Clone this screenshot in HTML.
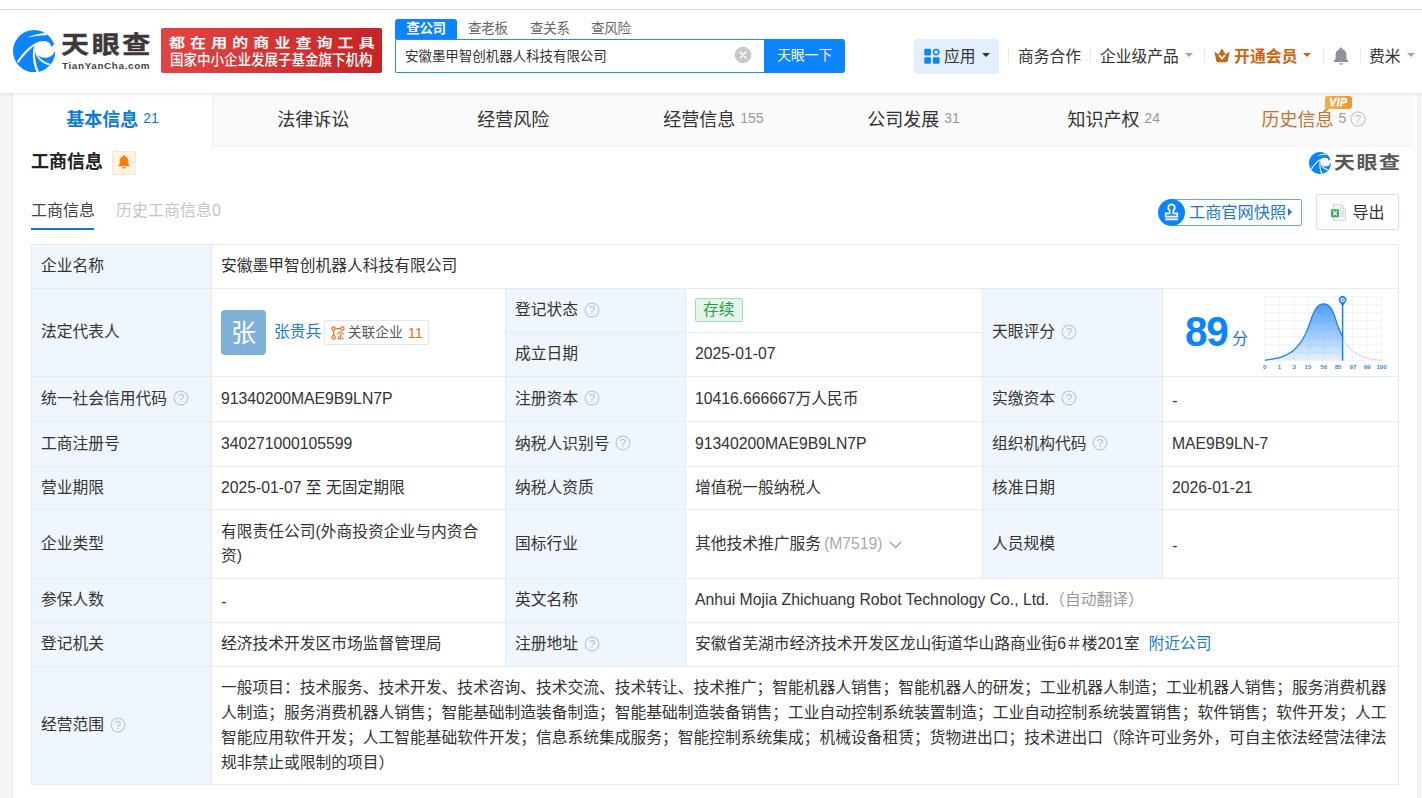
<!DOCTYPE html>
<html lang="zh-CN">
<head>
<meta charset="utf-8">
<title>天眼查 - 安徽墨甲智创机器人科技有限公司</title>
<style>
*{box-sizing:border-box;margin:0;padding:0}
html,body{width:1422px;height:798px;overflow:hidden;background:#f5f5f5}
body{font-family:"Liberation Sans","Noto Sans CJK SC",sans-serif;color:#333;font-size:16px;position:relative}
.abs{position:absolute}
#topstrip{left:0;top:0;width:1422px;height:9px;background:#fff}
#topline{left:0;top:9px;width:1422px;height:1px;background:#e4e4e4}
#header{left:0;top:10px;width:1422px;height:83px;background:#fff;box-shadow:0 1px 4px rgba(0,0,0,.10);z-index:5}
#content{left:13px;top:93px;width:1404px;height:705px;background:#fff;box-shadow:-1px 0 0 #ededed,1px 0 0 #efefef}
#nav{left:0;top:0;width:1401px;height:54px;background:#fafafa;border-bottom:2px solid #f6f6f6}
.tab{position:absolute;top:0;height:53px;width:200.14px;text-align:center;line-height:55px;font-size:18px;color:#333;white-space:nowrap}
.tab .n{font-size:14px;color:#999;margin-left:5px;position:relative;top:-2.8px}
.tab.on{background:#fff;color:#0a7be0;font-weight:bold;border-right:1px solid #eee;height:54px}
.tab.on .n{color:#0a7be0;font-weight:normal}
.nowrap{white-space:nowrap}

.stab{top:9px;font-size:13.5px;line-height:19px;color:#666;letter-spacing:-0.3px}
.htxt{top:34.6px;font-size:15.75px;line-height:24px;color:#333}
.sep{top:38px;width:1px;height:15px;background:#e8e8e8}
.caret{top:43.2px;width:0;height:0;border-left:4px solid transparent;border-right:4px solid transparent;border-top:4.5px solid #a0a0a0}

.c{position:absolute;border:1px solid #e6ebf2;background:#fff;display:flex;align-items:center;padding:0.6px 9px 0 8.9px;font-size:15.75px;line-height:24.75px;white-space:nowrap;color:#333}
.c.l{background:#eff6fd}
.q{margin-left:6px;flex:none;margin-top:-2px}
.lnk{color:#1b78d8}
.ava{display:inline-block;width:45px;height:45px;border-radius:4px;background:#7eb0d8;color:#fff;font-size:25px;line-height:46px;text-align:center;flex:none}
.rel{display:inline-flex;align-items:center;height:25px;border:1px solid #e6e6e6;border-radius:2px;padding:0 5px 0 5.5px;margin-left:3px;font-size:13.5px;line-height:22px;background:#fff}
.st{display:inline-block;height:24px;line-height:22px;padding:0 7.1px;margin-top:-2.2px;border:1px solid #a6dcb4;background:#e4f6e9;color:#2b9a4c;border-radius:2px;font-size:15.75px}

.vip{position:absolute;left:111px;top:3px;width:27px;height:13px;background:linear-gradient(90deg,#f0b04e,#e8973a);color:#fff;font-size:10.5px;line-height:13.5px;font-weight:bold;font-style:italic;border-radius:3px 3px 3px 0;text-align:center;letter-spacing:0.4px;-webkit-text-stroke:0.3px #fff}
.vip:after{content:"";position:absolute;left:0;top:13px;border-top:4px solid #e49a3c;border-right:4px solid transparent}
</style>
</head>
<body>
<div id="topstrip" class="abs"></div>
<div id="topline" class="abs"></div>
<div id="header" class="abs">
<!--HS-->
<svg class="abs" style="left:12.7px;top:19.7px" width="42.3" height="42.3" viewBox="70 85 625 625">
<circle cx="382.5" cy="397.5" r="312.5" fill="#0a84ff"/>
<path fill="#fff" d="M400,283 C455,245 560,235 605,275 C630,300 637,328 625,347 L662,305 L710,290 L710,380 L692,380 C680,450 610,500 525,495 C460,490 415,455 398,415 C390,370 392,320 400,283 Z"/>
<path fill="#fff" d="M280,200 C360,158 460,134 552,130 L572,162 C470,158 370,178 280,200 Z"/>
<path fill="#fff" d="M405,276 C295,335 195,445 128,552 L150,574 C218,470 312,368 405,302 Z"/>
<path fill="#fff" d="M398,283 C345,400 352,560 418,708 L452,702 C390,560 380,420 404,300 Z"/>
<path fill="#fff" d="M396,410 C415,505 498,578 603,606 L618,584 C522,556 450,498 420,436 Z"/>
</svg>
<div class="abs nowrap" id="logotxt" style="left:60.5px;top:16.5px;font-size:24px;line-height:36px;font-weight:700;color:#3d3837;transform-origin:0 0;transform:scaleX(1.17);letter-spacing:2.2px;-webkit-text-stroke:0.45px #3d3837">天眼查</div>
<div class="abs nowrap" id="logosub" style="left:62px;top:50px;font-size:8.4px;line-height:12px;font-weight:bold;color:#444;transform-origin:0 0;transform:scaleX(1.18);letter-spacing:0.53px">TianYanCha.com</div>
<div class="abs" id="banner" style="left:161px;top:18px;width:221px;height:44.6px;border-radius:2px;background:linear-gradient(90deg,#e24444 0%,#d63434 50%,#c62424 100%);color:#fff">
<div class="abs nowrap" id="bn1" style="left:8px;top:4.5px;font-weight:500;-webkit-text-stroke:0.25px #fff;font-size:12.8px;line-height:20px;letter-spacing:4.2px;transform-origin:0 0;transform:scaleX(1.24)">都在用的商业查询工具</div>
<div class="abs nowrap" id="bn2" style="left:8.8px;top:21.9px;font-size:14.8px;line-height:20px;font-weight:500;transform-origin:0 0;transform:scaleX(0.912)">国家中小企业发展子基金旗下机构</div>
</div>
<div class="abs nowrap" style="left:395px;top:9px;width:62px;height:20px;background:#0a84ff;border-radius:3px 3px 0 0;color:#fff;font-size:13.5px;line-height:19px;text-align:center;font-weight:bold;letter-spacing:-0.3px">查公司</div>
<div class="abs nowrap stab" style="left:468px">查老板</div>
<div class="abs nowrap stab" style="left:530px">查关系</div>
<div class="abs nowrap stab" style="left:591px">查风险</div>
<div class="abs" style="left:395px;top:28.5px;width:370px;height:34.5px;border:1.5px solid #2a8bea;border-right:0;border-radius:2px 0 0 2px;background:#fff"></div>
<div class="abs nowrap" style="left:405px;top:30px;font-size:13.5px;line-height:34px;color:#333;letter-spacing:-0.05px">安徽墨甲智创机器人科技有限公司</div>
<svg class="abs" style="left:734px;top:36px" width="18" height="18" viewBox="0 0 18 18"><circle cx="9" cy="9" r="8.3" fill="#c8c8cc"/><path d="M6,6 L12,12 M12,6 L6,12" stroke="#fff" stroke-width="1.4" stroke-linecap="round"/></svg>
<div class="abs nowrap" style="left:764px;top:29px;width:81px;height:34px;background:#0a84ff;border-radius:0 3px 3px 0;color:#fff;font-size:14px;line-height:33px;text-align:center;letter-spacing:-0.3px">天眼一下</div>
<div class="abs" style="left:914px;top:28.5px;width:85px;height:35.5px;background:#e3effc;border-radius:3px"></div>
<svg class="abs" style="left:924px;top:38px" width="17" height="17" viewBox="0 0 17 17"><rect x="0.3" y="0.8" width="6.6" height="6.6" rx="1.2" fill="#0a84ff"/><rect x="0.3" y="9.2" width="6.6" height="6.6" rx="1.2" fill="#0a84ff"/><rect x="8.9" y="9.2" width="6.6" height="6.6" rx="1.2" fill="#0a84ff"/><circle cx="12.2" cy="4.1" r="2.6" fill="none" stroke="#0a84ff" stroke-width="1.5"/></svg>
<div class="abs nowrap htxt" style="left:944px">应用</div>
<div class="abs caret" style="left:982px;border-top-color:#333"></div>
<div class="abs sep" style="left:1008px"></div>
<div class="abs nowrap htxt" style="left:1018px">商务合作</div>
<div class="abs sep" style="left:1090px"></div>
<div class="abs nowrap htxt" style="left:1100px">企业级产品</div>
<div class="abs caret" style="left:1185px"></div>
<div class="abs sep" style="left:1204px"></div>
<svg class="abs" style="left:1213.5px;top:38px" width="16" height="15" viewBox="0 0 16 15"><path fill="#d2620c" d="M0.3,3.6 L4.3,6.6 L8,0.6 L11.7,6.6 L15.7,3.6 L13.6,13.2 Q13.4,14.2 12.4,14.2 L3.6,14.2 Q2.6,14.2 2.4,13.2 Z"/><path d="M5.4,7.6 L8,10.6 L10.6,7.6" fill="none" stroke="#fff" stroke-width="1.7" stroke-linecap="round" stroke-linejoin="round"/></svg>
<div class="abs nowrap htxt" style="left:1234px;color:#d2620c;font-weight:bold;letter-spacing:0.15px">开通会员</div>
<div class="abs caret" style="left:1303px;border-top-color:#d2620c"></div>
<div class="abs sep" style="left:1323px"></div>
<svg class="abs" style="left:1333px;top:37px" width="16" height="18.4" viewBox="0 0 16 19"><path fill="#8e9198" d="M8,0.6 C8.8,0.6 9.4,1.2 9.4,2 L9.4,2.4 C12,3 13.6,5.2 13.6,8 L13.6,12.2 L15.4,14.4 L15.4,15.4 L0.6,15.4 L0.6,14.4 L2.4,12.2 L2.4,8 C2.4,5.2 4,3 6.6,2.4 L6.6,2 C6.6,1.2 7.2,0.6 8,0.6 Z"/><rect x="6" y="16.8" width="4" height="1.4" rx="0.7" fill="#8e9198"/></svg>
<div class="abs sep" style="left:1359.5px"></div>
<div class="abs nowrap htxt" style="left:1369px">费米</div>
<div class="abs caret" style="left:1407px"></div>
<!--HE-->
</div>
<div id="content" class="abs">
<div id="nav" class="abs">
<div class="tab on" style="left:0">基本信息<span class="n">21</span></div>
<div class="tab" style="left:200.14px">法律诉讼</div>
<div class="tab" style="left:400.28px">经营风险</div>
<div class="tab" style="left:600.42px">经营信息<span class="n">155</span></div>
<div class="tab" style="left:800.56px">公司发展<span class="n">31</span></div>
<div class="tab" style="left:1000.70px">知识产权<span class="n">24</span></div>
<div class="tab" style="left:1200.84px;color:#c8702a">历史信息<span class="n">5</span><svg style="display:inline-block;vertical-align:-1px;margin-left:4px;position:relative;top:0.4px" width="16" height="16" viewBox="0 0 16 16"><circle cx="8" cy="8" r="7.1" fill="none" stroke="#c3ccd8" stroke-width="1.2"/><text x="8" y="12.1" text-anchor="middle" font-family="Liberation Sans,sans-serif" font-size="11.6" fill="#b3becc">?</text></svg><span class="vip">VIP</span></div>
</div>
<!--SS-->
<div class="abs nowrap" style="left:18px;top:56px;font-size:18px;line-height:26px;font-weight:bold;color:#222">工商信息</div>
<div class="abs" style="left:99px;top:57.5px;width:24px;height:24px;background:#fff3e6;border:1px solid #fde3c8;border-radius:2px"></div>
<svg class="abs" style="left:105px;top:61.8px" width="12" height="14" viewBox="0 0 12 14"><path fill="#ff7d00" d="M6,0.3 C6.7,0.3 7.1,0.8 7.1,1.4 C9.2,1.9 10.3,3.6 10.3,5.8 L10.3,8.8 L11.6,10.4 L11.6,11.2 L0.4,11.2 L0.4,10.4 L1.7,8.8 L1.7,5.8 C1.7,3.6 2.8,1.9 4.9,1.4 C4.9,0.8 5.3,0.3 6,0.3 Z"/><path fill="#ff7d00" d="M4.3,12 L7.7,12 C7.5,13 6.9,13.6 6,13.6 C5.1,13.6 4.5,13 4.3,12 Z"/></svg>
<svg class="abs" style="left:1296px;top:58.5px" width="22" height="22" viewBox="70 85 625 625">
<circle cx="382.5" cy="397.5" r="312.5" fill="#0a84ff"/>
<path fill="#fff" d="M400,283 C455,245 560,235 605,275 C630,300 637,328 625,347 L662,305 L710,290 L710,380 L692,380 C680,450 610,500 525,495 C460,490 415,455 398,415 C390,370 392,320 400,283 Z"/>
<path fill="#fff" d="M280,200 C360,158 460,134 552,130 L572,162 C470,158 370,178 280,200 Z"/>
<path fill="#fff" d="M405,276 C295,335 195,445 128,552 L150,574 C218,470 312,368 405,302 Z"/>
<path fill="#fff" d="M398,283 C345,400 352,560 418,708 L452,702 C390,560 380,420 404,300 Z"/>
<path fill="#fff" d="M396,410 C415,505 498,578 603,606 L618,584 C522,556 450,498 420,436 Z"/>
</svg>
<div class="abs nowrap" id="wm" style="left:1320.5px;top:56.5px;font-size:18px;line-height:26px;font-weight:700;color:#585858;transform-origin:0 0;transform:scaleX(1.16);letter-spacing:1.4px">天眼查</div>

<div class="abs nowrap" style="left:18px;top:106px;font-size:16px;line-height:24px;color:#444">工商信息</div>
<div class="abs" style="left:18px;top:134.8px;width:63px;height:2.2px;background:#0a7be0"></div>
<div class="abs nowrap" style="left:103px;top:106px;font-size:16px;line-height:24px;color:#c3c6cc">历史工商信息0</div>

<div class="abs" style="left:1158px;top:106px;width:131px;height:26.5px;border:1px solid #6aa9ea;border-radius:2px;background:#fff"></div>
<div class="abs" style="left:1145px;top:105.5px;width:27px;height:27px;border-radius:50%;background:#0a84ff"></div>
<svg class="abs" style="left:1150px;top:109.5px" width="17" height="18.2" viewBox="0 0 15 16"><path fill="none" stroke="#fff" stroke-width="1.5" d="M7.5,1.2 a2.9,2.9 0 0 1 1.6,5.3 L9.1,9.2 L12.6,9.2 L12.6,12 L2.4,12 L2.4,9.2 L5.9,9.2 L5.9,6.5 A2.9,2.9 0 0 1 7.5,1.2 Z"/><rect x="2" y="13.6" width="11" height="1.6" fill="#fff"/></svg>
<div class="abs nowrap" style="left:1176px;top:107.4px;font-size:16.2px;line-height:24px;color:#1b78d8">工商官网快照</div>
<div class="abs" style="left:1275px;top:115px;width:0;height:0;border-top:4px solid transparent;border-bottom:4px solid transparent;border-left:4.5px solid #1b78d8"></div>

<div class="abs" style="left:1303px;top:101px;width:83px;height:35.5px;border:1px solid #dde0e8;border-radius:2px;background:#fff"></div>
<svg class="abs" style="left:1317px;top:110.5px" width="16" height="17" viewBox="0 0 16 17"><path d="M3.5,0.5 L11.5,0.5 L15.5,4.5 L15.5,16.5 L3.5,16.5 Z" fill="#f3f4f6" stroke="#d5d8de" stroke-width="1"/><path d="M11.5,0.5 L11.5,4.5 L15.5,4.5" fill="#e4e6ea" stroke="#d5d8de" stroke-width="1"/><path d="M10,7 h4 M10,9.5 h4 M10,12 h4" stroke="#c5c9d0" stroke-width="1"/><rect x="1" y="5.2" width="8" height="8" rx="0.8" fill="#3dab66"/><path d="M3.2,7.2 L6.8,11.2 M6.8,7.2 L3.2,11.2" stroke="#fff" stroke-width="1.3"/></svg>
<div class="abs nowrap" style="left:1339.5px;top:108.3px;font-size:16px;line-height:24px;color:#333">导出</div>
<!--TS-->
<div class="c l" style="left:18px;top:151px;width:181px;height:45px"><span>企业名称</span></div>
<div class="c" style="left:198px;top:151px;width:1188px;height:45px"><span>安徽墨甲智创机器人科技有限公司</span></div>
<div class="c l" style="left:18px;top:195px;width:181px;height:89px"><span>法定代表人</span></div>
<div class="c" style="left:198px;top:195px;width:295px;height:89px"><span class="ava">张</span><span class="lnk" style="margin-left:8px">张贵兵</span><span class="rel"><svg width="14" height="14" viewBox="0 0 14 14" style="margin-right:3px;flex:none"><g fill="none" stroke="#e8752d" stroke-width="1.3"><circle cx="2.6" cy="2.6" r="1.7"/><circle cx="11.4" cy="2.6" r="1.7"/><circle cx="2.6" cy="11.4" r="1.7"/><path d="M4.3,2.6 H9.7 M2.6,4.3 V9.7"/></g><g fill="none" stroke="#e8752d" stroke-width="1.1"><path d="M6.2,8.3 L9.4,5.9 L12.8,8.3 M9.4,7.6 V12.6 M9.4,10 H11.6 M6.4,12.8 H12.8 M7.6,10.2 V12.6"/></g></svg><span style="color:#5a5a5a;font-size:13.8px">关联企业</span><span style="color:#e07328;margin-left:5px;font-size:14.5px">11</span></span></div>
<div class="c l" style="left:492px;top:195px;width:181px;height:45px"><span>登记状态</span><svg class="q" width="16" height="16" viewBox="0 0 16 16"><circle cx="8" cy="8" r="6.9" fill="none" stroke="#b3cae3" stroke-width="1.2"/><text x="8" y="12.1" text-anchor="middle" font-family="Liberation Sans,sans-serif" font-size="11.6" fill="#a6c1de">?</text></svg></div>
<div class="c" style="left:672px;top:195px;width:298px;height:45px"><span class="st">存续</span></div>
<div class="c l" style="left:492px;top:239px;width:181px;height:45px"><span>成立日期</span></div>
<div class="c" style="left:672px;top:239px;width:298px;height:45px"><span>2025-01-07</span></div>
<div class="c l" style="left:969px;top:195px;width:181px;height:89px"><span>天眼评分</span><svg class="q" width="16" height="16" viewBox="0 0 16 16"><circle cx="8" cy="8" r="6.9" fill="none" stroke="#b3cae3" stroke-width="1.2"/><text x="8" y="12.1" text-anchor="middle" font-family="Liberation Sans,sans-serif" font-size="11.6" fill="#a6c1de">?</text></svg></div>
<div class="c" style="left:1149px;top:195px;width:237px;height:89px"><!--SCS--><svg class="abs" style="left:0;top:0" width="235" height="87" viewBox="1163 289 235 87">
<defs><linearGradient id="bg1" x1="0" y1="303" x2="0" y2="361" gradientUnits="userSpaceOnUse"><stop offset="0" stop-color="#3f97f7" stop-opacity=".95"/><stop offset="1" stop-color="#3f97f7" stop-opacity=".12"/></linearGradient></defs>
<g fill="none" stroke="#edf2fb" stroke-width="0.9"><path d="M1264.80,296.6 V360.3"/><path d="M1279.42,296.6 V360.3"/><path d="M1294.05,296.6 V360.3"/><path d="M1308.67,296.6 V360.3"/><path d="M1323.30,296.6 V360.3"/><path d="M1337.92,296.6 V360.3"/><path d="M1352.55,296.6 V360.3"/><path d="M1367.17,296.6 V360.3"/><path d="M1381.80,296.6 V360.3"/><path d="M1264.8,296.60 H1381.8"/><path d="M1264.8,304.56 H1381.8"/><path d="M1264.8,312.53 H1381.8"/><path d="M1264.8,320.49 H1381.8"/><path d="M1264.8,328.45 H1381.8"/><path d="M1264.8,336.41 H1381.8"/><path d="M1264.8,344.38 H1381.8"/><path d="M1264.8,352.34 H1381.8"/><path d="M1264.8,360.30 H1381.8"/></g>
<path d="M1342.6,336.9 C1343.3,338.1 1344.9,342.0 1346.6,344.3 C1348.2,346.6 1350.3,348.8 1352.5,350.7 C1354.7,352.6 1357.5,354.2 1359.9,355.5 C1362.3,356.8 1364.7,357.5 1367.1,358.2 C1369.5,358.9 1371.8,359.1 1374.3,359.5 C1376.8,359.9 1380.5,360.2 1381.8,360.3 L1342.6,360.3 Z" fill="#f3f5f8" fill-opacity=".45"/>
<path d="M1342.6,336.9 C1343.3,338.1 1344.9,342.0 1346.6,344.3 C1348.2,346.6 1350.3,348.8 1352.5,350.7 C1354.7,352.6 1357.5,354.2 1359.9,355.5 C1362.3,356.8 1364.7,357.5 1367.1,358.2 C1369.5,358.9 1371.8,359.1 1374.3,359.5 C1376.8,359.9 1380.5,360.2 1381.8,360.3" fill="none" stroke="#d3d7de" stroke-width="1"/>
<path d="M1264.8,360.3 C1267.2,359.9 1275.8,358.7 1279.5,357.7 C1283.2,356.7 1284.5,355.8 1287.0,354.5 C1289.5,353.2 1291.9,351.8 1294.2,349.7 C1296.5,347.6 1299.0,344.7 1300.8,342.2 C1302.6,339.7 1303.8,337.4 1305.1,334.7 C1306.4,332.0 1307.6,329.4 1308.8,326.2 C1310.0,323.0 1311.2,318.6 1312.5,315.6 C1313.8,312.6 1315.0,309.9 1316.3,308.1 C1317.5,306.3 1318.8,305.4 1320.0,304.7 C1321.2,304.0 1322.2,303.9 1323.4,303.9 C1324.6,303.9 1326.1,304.1 1327.4,304.9 C1328.7,305.7 1330.0,306.8 1331.2,308.6 C1332.4,310.4 1333.3,312.7 1334.4,315.6 C1335.5,318.5 1336.5,322.6 1337.9,326.2 C1339.3,329.8 1341.8,335.1 1342.6,336.9 L1342.6,360.3 Z" fill="url(#bg1)"/>
<path d="M1264.8,360.3 C1267.2,359.9 1275.8,358.7 1279.5,357.7 C1283.2,356.7 1284.5,355.8 1287.0,354.5 C1289.5,353.2 1291.9,351.8 1294.2,349.7 C1296.5,347.6 1299.0,344.7 1300.8,342.2 C1302.6,339.7 1303.8,337.4 1305.1,334.7 C1306.4,332.0 1307.6,329.4 1308.8,326.2 C1310.0,323.0 1311.2,318.6 1312.5,315.6 C1313.8,312.6 1315.0,309.9 1316.3,308.1 C1317.5,306.3 1318.8,305.4 1320.0,304.7 C1321.2,304.0 1322.2,303.9 1323.4,303.9 C1324.6,303.9 1326.1,304.1 1327.4,304.9 C1328.7,305.7 1330.0,306.8 1331.2,308.6 C1332.4,310.4 1333.3,312.7 1334.4,315.6 C1335.5,318.5 1336.5,322.6 1337.9,326.2 C1339.3,329.8 1341.8,335.1 1342.6,336.9" fill="none" stroke="#1f82ee" stroke-width="1.3"/>
<path d="M1342.6,304 V360.6" stroke="#1f82ee" stroke-width="1.5"/>
<path d="M1342.6,306.6 L1339.9,302.2 A3.75,3.75 0 1 1 1345.3,302.2 Z" fill="#1f82ee"/>
<circle cx="1342.6" cy="299.8" r="2.15" fill="#fff"/><circle cx="1342.6" cy="299.8" r="1" fill="#1f82ee"/>
<g font-family="Liberation Sans,sans-serif" font-size="6.1" font-weight="bold" fill="#2f88ec"><text x="1264.6" y="368.6" text-anchor="middle">0</text><text x="1279.5" y="368.6" text-anchor="middle">1</text><text x="1294.2" y="368.6" text-anchor="middle">3</text><text x="1308" y="368.6" text-anchor="middle">15</text><text x="1323.7" y="368.6" text-anchor="middle">50</text><text x="1338.1" y="368.6" text-anchor="middle">85</text><text x="1353" y="368.6" text-anchor="middle">97</text><text x="1367.1" y="368.6" text-anchor="middle">99</text><text x="1381.5" y="368.6" text-anchor="middle">100</text></g>
<text x="1185" y="345.6" transform="translate(0,345.6) scale(1,1.04) translate(0,-345.6)" font-family="Liberation Sans,sans-serif" font-weight="bold" font-size="40.5" fill="#0a84ff" letter-spacing="-1.2">89</text>
<text x="1232.3" y="344" font-family="Liberation Sans,Noto Sans CJK SC,sans-serif" font-size="15.75" fill="#1b78d8">分</text>
</svg><!--SCE--></div>
<div class="c l" style="left:18px;top:283px;width:181px;height:46px"><span>统一社会信用代码</span><svg class="q" width="16" height="16" viewBox="0 0 16 16"><circle cx="8" cy="8" r="6.9" fill="none" stroke="#b3cae3" stroke-width="1.2"/><text x="8" y="12.1" text-anchor="middle" font-family="Liberation Sans,sans-serif" font-size="11.6" fill="#a6c1de">?</text></svg></div>
<div class="c" style="left:198px;top:283px;width:295px;height:46px"><span>91340200MAE9B9LN7P</span></div>
<div class="c l" style="left:492px;top:283px;width:181px;height:46px"><span>注册资本</span><svg class="q" width="16" height="16" viewBox="0 0 16 16"><circle cx="8" cy="8" r="6.9" fill="none" stroke="#b3cae3" stroke-width="1.2"/><text x="8" y="12.1" text-anchor="middle" font-family="Liberation Sans,sans-serif" font-size="11.6" fill="#a6c1de">?</text></svg></div>
<div class="c" style="left:672px;top:283px;width:298px;height:46px"><span>10416.666667万人民币</span></div>
<div class="c l" style="left:969px;top:283px;width:181px;height:46px"><span>实缴资本</span><svg class="q" width="16" height="16" viewBox="0 0 16 16"><circle cx="8" cy="8" r="6.9" fill="none" stroke="#b3cae3" stroke-width="1.2"/><text x="8" y="12.1" text-anchor="middle" font-family="Liberation Sans,sans-serif" font-size="11.6" fill="#a6c1de">?</text></svg></div>
<div class="c" style="left:1149px;top:283px;width:237px;height:46px"><span style="position:relative;top:2px;left:0.4px">-</span></div>
<div class="c l" style="left:18px;top:328px;width:181px;height:46px"><span>工商注册号</span></div>
<div class="c" style="left:198px;top:328px;width:295px;height:46px"><span>340271000105599</span></div>
<div class="c l" style="left:492px;top:328px;width:181px;height:46px"><span>纳税人识别号</span><svg class="q" width="16" height="16" viewBox="0 0 16 16"><circle cx="8" cy="8" r="6.9" fill="none" stroke="#b3cae3" stroke-width="1.2"/><text x="8" y="12.1" text-anchor="middle" font-family="Liberation Sans,sans-serif" font-size="11.6" fill="#a6c1de">?</text></svg></div>
<div class="c" style="left:672px;top:328px;width:298px;height:46px"><span>91340200MAE9B9LN7P</span></div>
<div class="c l" style="left:969px;top:328px;width:181px;height:46px"><span>组织机构代码</span><svg class="q" width="16" height="16" viewBox="0 0 16 16"><circle cx="8" cy="8" r="6.9" fill="none" stroke="#b3cae3" stroke-width="1.2"/><text x="8" y="12.1" text-anchor="middle" font-family="Liberation Sans,sans-serif" font-size="11.6" fill="#a6c1de">?</text></svg></div>
<div class="c" style="left:1149px;top:328px;width:237px;height:46px"><span>MAE9B9LN-7</span></div>
<div class="c l" style="left:18px;top:373px;width:181px;height:44px"><span>营业期限</span></div>
<div class="c" style="left:198px;top:373px;width:295px;height:44px"><span>2025-01-07 至 无固定期限</span></div>
<div class="c l" style="left:492px;top:373px;width:181px;height:44px"><span>纳税人资质</span></div>
<div class="c" style="left:672px;top:373px;width:298px;height:44px"><span>增值税一般纳税人</span></div>
<div class="c l" style="left:969px;top:373px;width:181px;height:44px"><span>核准日期</span></div>
<div class="c" style="left:1149px;top:373px;width:237px;height:44px"><span>2026-01-21</span></div>
<div class="c l" style="left:18px;top:416px;width:181px;height:70px"><span>企业类型</span></div>
<div class="c" style="left:198px;top:416px;width:295px;height:70px"><span>有限责任公司(外商投资企业与内资合<br>资)</span></div>
<div class="c l" style="left:492px;top:416px;width:181px;height:70px"><span>国标行业</span></div>
<div class="c" style="left:672px;top:416px;width:298px;height:70px"><span>其他技术推广服务</span><span style="color:#aaa;margin-left:3px">(M7519)</span><svg width="13" height="8" viewBox="0 0 13 8" style="margin-left:6px;margin-top:0.6px;flex:none"><path d="M1,1 L6.5,6.5 L12,1" fill="none" stroke="#999" stroke-width="1.2"/></svg></div>
<div class="c l" style="left:969px;top:416px;width:181px;height:70px"><span>人员规模</span></div>
<div class="c" style="left:1149px;top:416px;width:237px;height:70px"><span style="position:relative;top:2px;left:0.4px">-</span></div>
<div class="c l" style="left:18px;top:485px;width:181px;height:45px"><span>参保人数</span></div>
<div class="c" style="left:198px;top:485px;width:295px;height:45px"><span style="position:relative;top:2px;left:0.4px">-</span></div>
<div class="c l" style="left:492px;top:485px;width:181px;height:45px"><span>英文名称</span></div>
<div class="c" style="left:672px;top:485px;width:714px;height:45px"><span>Anhui Mojia Zhichuang Robot Technology Co., Ltd.</span><span style="color:#999;margin-left:0">（自动翻译）</span></div>
<div class="c l" style="left:18px;top:529px;width:181px;height:45px"><span>登记机关</span></div>
<div class="c" style="left:198px;top:529px;width:295px;height:45px"><span>经济技术开发区市场监督管理局</span></div>
<div class="c l" style="left:492px;top:529px;width:181px;height:45px"><span>注册地址</span><svg class="q" width="16" height="16" viewBox="0 0 16 16"><circle cx="8" cy="8" r="6.9" fill="none" stroke="#b3cae3" stroke-width="1.2"/><text x="8" y="12.1" text-anchor="middle" font-family="Liberation Sans,sans-serif" font-size="11.6" fill="#a6c1de">?</text></svg></div>
<div class="c" style="left:672px;top:529px;width:714px;height:45px"><span>安徽省芜湖市经济技术开发区龙山街道华山路商业街6＃楼201室</span><span class="lnk" style="margin-left:9px">附近公司</span></div>
<div class="c l" style="left:18px;top:573px;width:181px;height:119px"><span>经营范围</span><svg class="q" width="16" height="16" viewBox="0 0 16 16"><circle cx="8" cy="8" r="6.9" fill="none" stroke="#b3cae3" stroke-width="1.2"/><text x="8" y="12.1" text-anchor="middle" font-family="Liberation Sans,sans-serif" font-size="11.6" fill="#a6c1de">?</text></svg></div>
<div class="c" style="left:198px;top:573px;width:1188px;height:119px"><span>一般项目：技术服务、技术开发、技术咨询、技术交流、技术转让、技术推广；智能机器人销售；智能机器人的研发；工业机器人制造；工业机器人销售；服务消费机器<br>人制造；服务消费机器人销售；智能基础制造装备制造；智能基础制造装备销售；工业自动控制系统装置制造；工业自动控制系统装置销售；软件销售；软件开发；人工<br>智能应用软件开发；人工智能基础软件开发；信息系统集成服务；智能控制系统集成；机械设备租赁；货物进出口；技术进出口（除许可业务外，可自主依法经营法律法<br>规非禁止或限制的项目）</span></div>
<!--TE-->
<!--SE-->
</div>
</body>
</html>
